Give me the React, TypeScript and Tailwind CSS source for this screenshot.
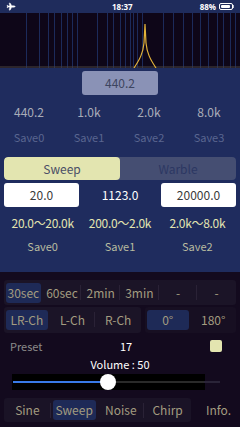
import { Plane } from "lucide-react"

const gridX = [26, 39, 48, 54, 61, 67, 72, 77, 97, 107, 113, 120, 125, 130, 133, 137, 142, 163, 173, 183, 192, 200, 208, 217, 223, 230, 235]

const font = { fontFamily: '"Noto Sans CJK JP", "Noto Sans", sans-serif' }

function StatusBar() {
  return (
    <div className="flex h-[13px] items-center justify-between bg-[#1f2c5c] px-[6px] text-[8px] font-bold text-white">
      <Plane className="size-[9px] rotate-45 fill-white" strokeWidth={1} />
      <span className="ml-[30px]">18:37</span>
      <div className="flex items-center gap-[3px]">
        <span>88%</span>
        <div className="flex items-center">
          <div className="flex h-[7px] w-[14px] items-center rounded-[2px] border border-white p-[1px]">
            <div className="h-full w-[85%] rounded-[1px] bg-white" />
          </div>
          <div className="h-[3px] w-[1px] bg-white/70" />
        </div>
      </div>
    </div>
  )
}

function Graph() {
  return (
    <div className="h-[55px] bg-[#0e0618]">
      <svg width="240" height="55" viewBox="0 0 240 55">
        {gridX.map((x) => (
          <line key={x} x1={x + 0.5} y1="0" x2={x + 0.5} y2="55" stroke="#1c2a5a" strokeWidth="1" />
        ))}
        <line x1="0" y1="54" x2="240" y2="54" stroke="#4b4540" strokeWidth="1" />
        <path d="M134 55 C140 46 143 40 144 30 L145 11 L146 30 C147 40 150 46 156 55" fill="none" stroke="#e2b23a" strokeWidth="1.2" />
      </svg>
    </div>
  )
}

function NavyPanel() {
  return (
    <div className="flex h-[204px] flex-col bg-[#1f2c5e] px-[4px]" style={font}>
      <div className="mx-auto mt-[3px] flex h-[24px] w-[76px] items-center justify-center rounded-[3px] bg-[#8a92b6] text-[12px] text-[#3d4560]">
        440.2
      </div>
      <div className="mt-[5px] grid h-[23px] grid-cols-4 items-center text-center text-[12px] text-[#a9acb8]">
        <span className="-ml-[8px]">440.2</span>
        <span className="-ml-[4px]">1.0k</span>
        <span>2.0k</span>
        <span className="ml-[4px]">8.0k</span>
      </div>
      <div className="mt-[5px] grid h-[18px] grid-cols-4 items-center text-center text-[11px] text-[#5a6690]">
        <span className="-ml-[8px]">Save0</span>
        <span className="-ml-[4px]">Save1</span>
        <span>Save2</span>
        <span className="ml-[4px]">Save3</span>
      </div>
      <div className="mt-[11px] flex h-[23px] overflow-hidden rounded-[4px] bg-[#454e72] text-[12px]">
        <div className="flex flex-1 items-center justify-center rounded-[4px] bg-[#e3e5b0] text-[#4a4e66]">Sweep</div>
        <div className="flex flex-1 items-center justify-center text-[#2c3762]">Warble</div>
      </div>
      <div className="mt-[3px] flex h-[24px] items-center justify-between">
        <div className="flex h-full w-[75px] items-center justify-center rounded-[3px] bg-white text-[12px] text-[#3a3a3a]">20.0</div>
        <span className="text-[12px] text-white">1123.0</span>
        <div className="flex h-full w-[75px] items-center justify-center rounded-[3px] bg-white text-[12px] text-[#3a3a3a]">20000.0</div>
      </div>
      <div className="mt-[5px] grid h-[22px] grid-cols-3 items-center text-center text-[12px] tracking-[-0.3px] text-[#e3e5b0]">
        <span>20.0〜20.0k</span>
        <span>200.0〜2.0k</span>
        <span>2.0k〜8.0k</span>
      </div>
      <div className="mt-[3px] grid h-[18px] grid-cols-3 items-center text-center text-[11px] text-[#b9bca0]">
        <span>Save0</span>
        <span>Save1</span>
        <span>Save2</span>
      </div>
    </div>
  )
}

function Seg({ label, active, last }: { label: string; active?: boolean; last?: boolean }) {
  return (
    <div className="relative flex flex-1 items-center justify-center">
      <div className={`flex h-[20px] w-[calc(100%-4px)] items-center justify-center rounded-[3px] ${active ? "bg-[#1e2a57]" : ""}`}>
        {label}
      </div>
      {!last && !active ? <div className="absolute right-0 top-[5px] h-[15px] w-px bg-[#2a2236]" /> : null}
    </div>
  )
}

function BottomPanel() {
  return (
    <div className="flex flex-1 flex-col bg-[#130a1e] px-[4px] text-[12px] text-[#a39c80]" style={font}>
      <div className="mt-[8px] flex h-[25px] rounded-[3px] bg-[#1b1427]">
        <Seg label="30sec" active />
        <Seg label="60sec" />
        <Seg label="2min" />
        <Seg label="3min" />
        <Seg label="-" />
        <Seg label="-" last />
      </div>
      <div className="mt-[2px] flex h-[26px] gap-[4px]">
        <div className="flex w-[137px] rounded-[3px] bg-[#1b1427]">
          <Seg label="LR-Ch" active />
          <Seg label="L-Ch" />
          <Seg label="R-Ch" last />
        </div>
        <div className="flex flex-1 rounded-[3px] bg-[#170f22]">
          <Seg label="0°" active />
          <Seg label="180°" last />
        </div>
      </div>
      <div className="mt-[5px] flex h-[16px] items-center">
        <span className="ml-[6px] w-[60px] text-[11px] text-[#8b8a8a]">Preset</span>
        <span className="ml-[50px] text-[11px] text-white">17</span>
        <div className="ml-auto mr-[14px] size-[12px] rounded-[2px] bg-[#e3e5b0]" />
      </div>
      <div className="mt-[1px] flex h-[18px] items-center justify-center text-[11px] text-white">Volume : 50</div>
      <div className="relative mt-[1px] h-[17px]">
        <div className="absolute left-[8px] top-0 h-[16px] w-[193px] bg-black" />
        <div className="absolute left-[197px] top-[7px] h-[2px] w-[19px] bg-[#2a2438]" />
        <div className="absolute left-[10px] top-[7px] h-[2px] w-[190px] bg-[#2a2a2a]" />
        <div className="absolute left-[9px] top-[7px] h-[2px] w-[96px] bg-[#3a7ae8]" />
        <div className="absolute left-[96px] top-0 size-[16px] rounded-full bg-white" />
      </div>
      <div className="mt-[7px] flex h-[24px] items-center">
        <div className="flex h-full w-[187px] rounded-[3px] bg-[#1a1326]">
          <Seg label="Sine" />
          <Seg label="Sweep" active />
          <Seg label="Noise" />
          <Seg label="Chirp" last />
        </div>
        <span className="ml-[15px]">Info.</span>
      </div>
    </div>
  )
}

export default function App() {
  return (
    <div className="flex h-[427px] w-[240px] flex-col overflow-hidden bg-[#130a1e]">
      <StatusBar />
      <Graph />
      <NavyPanel />
      <BottomPanel />
    </div>
  )
}
